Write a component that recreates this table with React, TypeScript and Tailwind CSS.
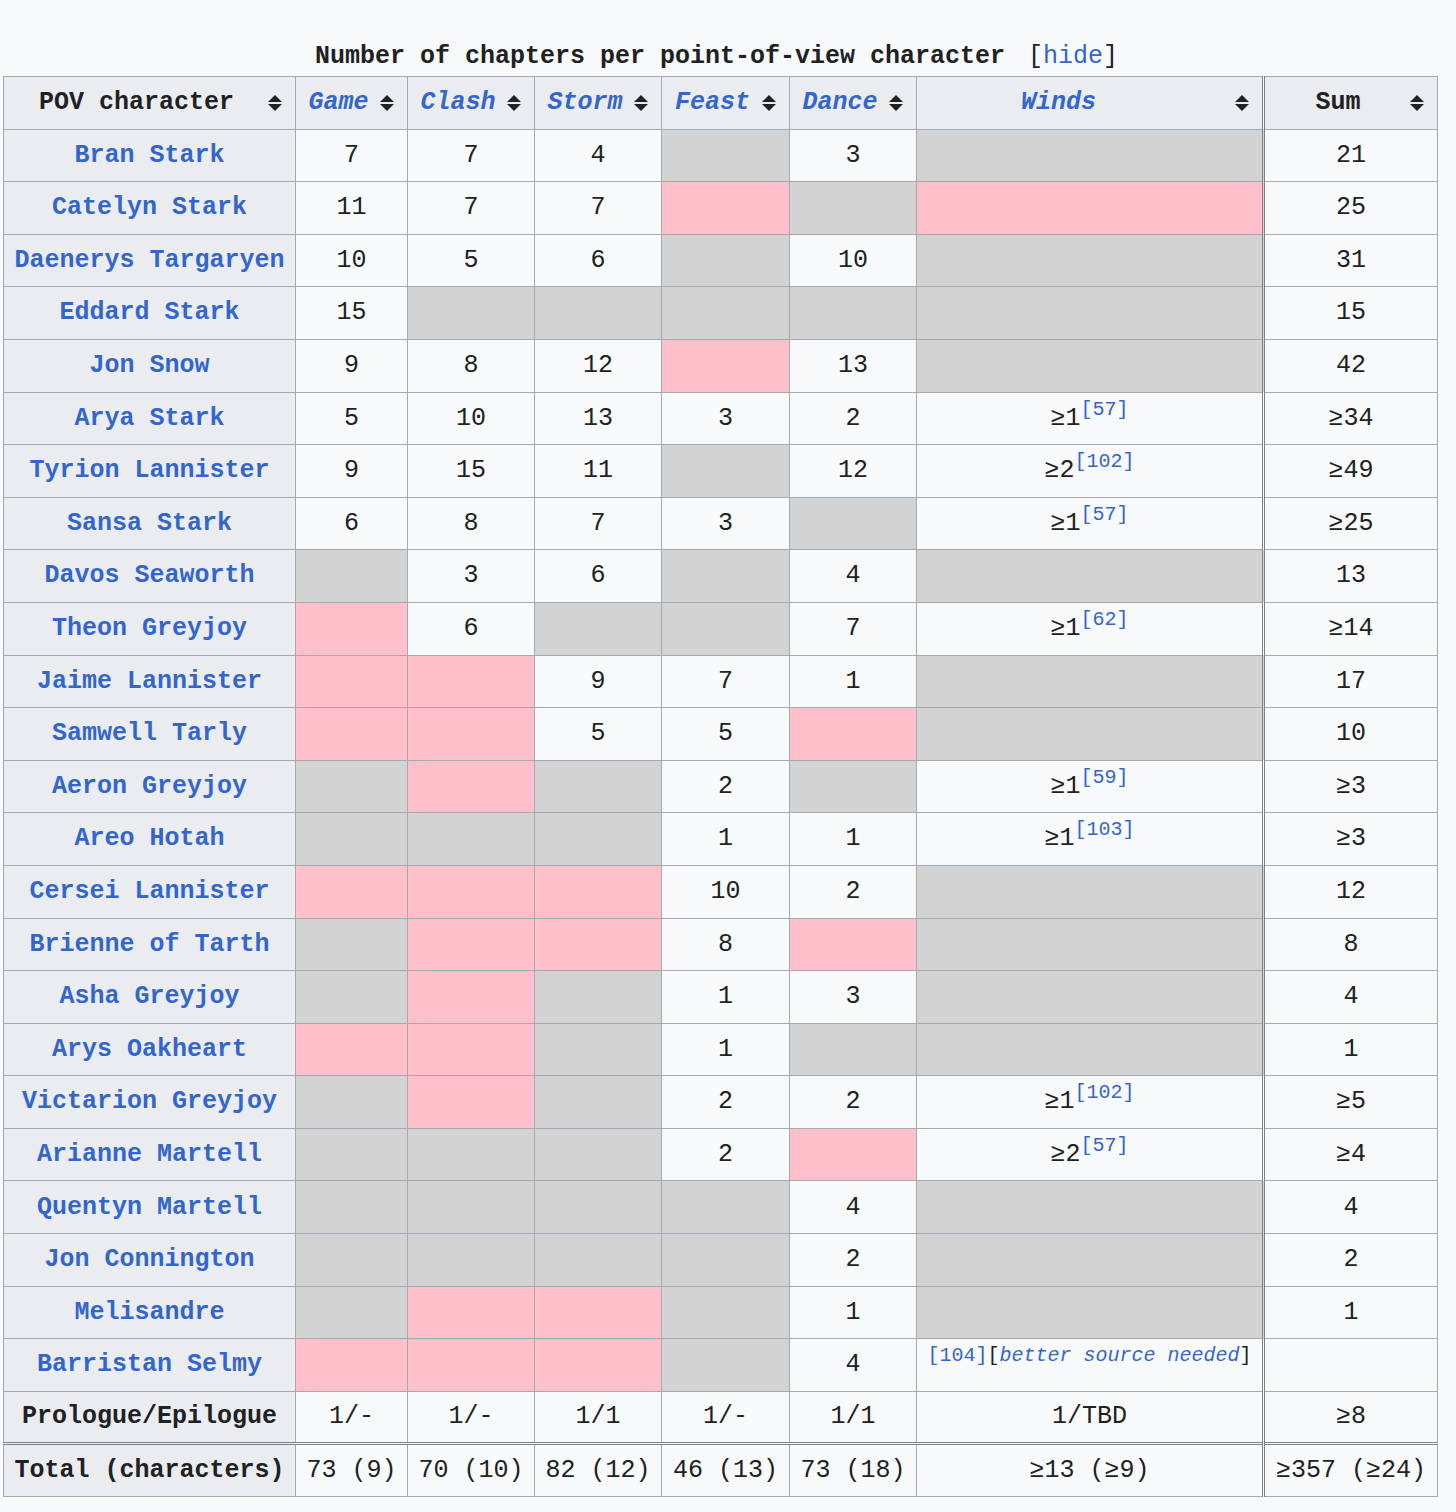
import React from 'react'

// g = not a POV in this book (gray), p = appears, not POV (pink)
const ROWS: [string, string[]][] = [
    ['Bran Stark', ['7', '7', '4', 'g', '3', 'g', '21']],
    ['Catelyn Stark', ['11', '7', '7', 'p', 'g', 'p', '25']],
    ['Daenerys Targaryen', ['10', '5', '6', 'g', '10', 'g', '31']],
    ['Eddard Stark', ['15', 'g', 'g', 'g', 'g', 'g', '15']],
    ['Jon Snow', ['9', '8', '12', 'p', '13', 'g', '42']],
    ['Arya Stark', ['5', '10', '13', '3', '2', '≥1|57', '≥34']],
    ['Tyrion Lannister', ['9', '15', '11', 'g', '12', '≥2|102', '≥49']],
    ['Sansa Stark', ['6', '8', '7', '3', 'g', '≥1|57', '≥25']],
    ['Davos Seaworth', ['g', '3', '6', 'g', '4', 'g', '13']],
    ['Theon Greyjoy', ['p', '6', 'g', 'g', '7', '≥1|62', '≥14']],
    ['Jaime Lannister', ['p', 'p', '9', '7', '1', 'g', '17']],
    ['Samwell Tarly', ['p', 'p', '5', '5', 'p', 'g', '10']],
    ['Aeron Greyjoy', ['g', 'p', 'g', '2', 'g', '≥1|59', '≥3']],
    ['Areo Hotah', ['g', 'g', 'g', '1', '1', '≥1|103', '≥3']],
    ['Cersei Lannister', ['p', 'p', 'p', '10', '2', 'g', '12']],
    ['Brienne of Tarth', ['g', 'p', 'p', '8', 'p', 'g', '8']],
    ['Asha Greyjoy', ['g', 'p', 'g', '1', '3', 'g', '4']],
    ['Arys Oakheart', ['p', 'p', 'g', '1', 'g', 'g', '1']],
    ['Victarion Greyjoy', ['g', 'p', 'g', '2', '2', '≥1|102', '≥5']],
    ['Arianne Martell', ['g', 'g', 'g', '2', 'p', '≥2|57', '≥4']],
    ['Quentyn Martell', ['g', 'g', 'g', 'g', '4', 'g', '4']],
    ['Jon Connington', ['g', 'g', 'g', 'g', '2', 'g', '2']],
    ['Melisandre', ['g', 'p', 'p', 'g', '1', 'g', '1']],
    ['Barristan Selmy', ['p', 'p', 'p', 'g', '4', 'bsn', '']],
]

const BOOKS = ['Game', 'Clash', 'Storm', 'Feast', 'Dance', 'Winds']

const cellBorder = 'border border-[#a2a9b1]'
const windsEdge = 'border-r-[3px] border-r-[#7d8288] [border-right-style:double]'

function SortIcon() {
    return (
        <svg
            width="14"
            height="16"
            viewBox="0 0 14 16"
            className="absolute right-[13px] top-1/2 -translate-y-1/2"
        >
            <path d="M0 7 L7 0 L14 7 Z" fill="#202122" />
            <path d="M0 9 L14 9 L7 16 Z" fill="#202122" />
        </svg>
    )
}

function Cite({ n }: { n: string }) {
    return (
        <sup className="relative -top-[10px] align-baseline text-[20px] leading-none text-[#3366cc]">
            [{n}]
        </sup>
    )
}

function DataCell({ v, col }: { v: string; col: number }) {
    const edge = col === 5 ? windsEdge : ''
    if (v === 'g') return <td className={`${cellBorder} ${edge} bg-[#d3d3d3]`} />
    if (v === 'p') return <td className={`${cellBorder} ${edge} bg-[#ffc0cb]`} />
    let content: React.ReactNode = v
    if (v === 'bsn') {
        content = (
            <sup className="relative -top-[10px] align-baseline text-[20px] leading-none">
                <span className="text-[#3366cc]">[104]</span>[
                <i className="text-[#3366cc]">better source needed</i>]
            </sup>
        )
    } else if (v.includes('|')) {
        const [num, ref] = v.split('|')
        content = (
            <>
                {num}
                <Cite n={ref} />
            </>
        )
    }
    return (
        <td className={`${cellBorder} ${edge} bg-[#f8f9fa] px-[9px] text-center`}>{content}</td>
    )
}

export default function App() {
    return (
        <div
            className="min-h-[1512px] bg-[#f8f9fa] text-[#202122] text-[25px] pt-[40px]"
            style={{ fontFamily: '"Liberation Mono", "DejaVu Sans Mono", monospace' }}
        >
            {/* Caption */}
            <div className="w-[1434px] ml-[3px] h-[34px] leading-[34px] mb-[2px] text-center pr-[7px]">
                <span className="font-bold">Number of chapters per point-of-view character</span>
                <span className="ml-[23px]">
                    [<span className="text-[#3366cc]">hide</span>]
                </span>
            </div>

            <table className="ml-[3px] w-[1434px] table-fixed border-collapse border border-[#a2a9b1] leading-[1.5]">
                <colgroup>
                    <col className="w-[292px]" />
                    <col className="w-[112px]" />
                    <col className="w-[127px]" />
                    <col className="w-[127px]" />
                    <col className="w-[128px]" />
                    <col className="w-[127px]" />
                    <col className="w-[347px]" />
                    <col className="w-[174px]" />
                </colgroup>
                <thead>
                    <tr className="h-[52.6px]">
                        <th className={`${cellBorder} relative bg-[#eaecf0] pl-[12px] pr-[38px] font-bold text-center whitespace-nowrap`}>
                            POV character
                            <SortIcon />
                        </th>
                        {BOOKS.map((b, i) => (
                            <th
                                key={b}
                                className={`${cellBorder} ${i === 5 ? windsEdge + ' pr-[74px]' : 'pr-[38px]'} relative bg-[#eaecf0] pl-[12px] font-bold italic text-[#3366cc] text-center whitespace-nowrap`}
                            >
                                {b}
                                <SortIcon />
                            </th>
                        ))}
                        <th className={`${cellBorder} relative bg-[#eaecf0] pl-[12px] pr-[38px] font-bold text-center`}>
                            Sum
                            <SortIcon />
                        </th>
                    </tr>
                </thead>
                <tbody>
                    {ROWS.map(([name, vals]) => (
                        <tr key={name} className="h-[52.6px]">
                            <th className={`${cellBorder} bg-[#eaecf0] px-[8px] font-bold text-[#3366cc] text-center whitespace-nowrap`}>
                                {name}
                            </th>
                            {vals.map((v, i) => (
                                <DataCell key={i} v={v} col={i} />
                            ))}
                        </tr>
                    ))}
                    <tr className="h-[52.6px]">
                        <th className={`${cellBorder} bg-[#eaecf0] px-[8px] font-bold text-center whitespace-nowrap`}>
                            Prologue/Epilogue
                        </th>
                        {['1/-', '1/-', '1/1', '1/-', '1/1', '1/TBD', '≥8'].map((v, i) => (
                            <DataCell key={i} v={v} col={i} />
                        ))}
                    </tr>
                    <tr className="h-[52.6px]">
                        <th className={`${cellBorder} border-t-[3px] border-t-[#7d8288] [border-top-style:double] bg-[#eaecf0] px-[4px] font-bold text-center whitespace-nowrap`}>
                            Total (characters)
                        </th>
                        {['73 (9)', '70 (10)', '82 (12)', '46 (13)', '73 (18)', '≥13 (≥9)', '≥357 (≥24)'].map((v, i) => (
                            <td
                                key={i}
                                className={`${cellBorder} border-t-[3px] border-t-[#7d8288] [border-top-style:double] ${i === 5 ? windsEdge : ''} bg-[#f8f9fa] px-[4px] text-center whitespace-nowrap`}
                            >
                                {v}
                            </td>
                        ))}
                    </tr>
                </tbody>
            </table>
        </div>
    )
}
